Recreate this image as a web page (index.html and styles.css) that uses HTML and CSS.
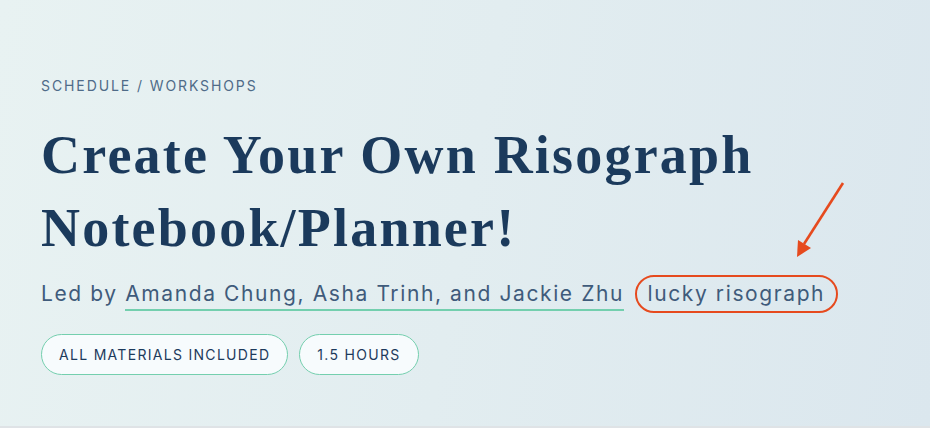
FILE: index.html
```html
<!DOCTYPE html>
<html>
<head>
<meta charset="utf-8">
<link rel="stylesheet" href="styles.css">
</head>
<body>
<main class="hero">
  <div class="crumbs">Schedule / Workshops</div>
  <h1 class="title">Create Your Own Risograph<br>Notebook/Planner!</h1>
  <p class="byline">Led by <span class="names">Amanda Chung, Asha Trinh, and Jackie Zhu</span> <span class="org">lucky risograph</span></p>
  <div class="tags">
    <span class="tag">All materials included</span>
    <span class="tag">1.5 hours</span>
  </div>
  <svg class="arrow" width="80" height="100" viewBox="780 170 80 100">
    <line x1="843" y1="183" x2="804" y2="244" stroke="#e64a1e" stroke-width="2.6"/>
    <polygon points="797,257 798,240 811,248" fill="#e64a1e"/>
  </svg>
</main>
</body>
</html>
```
FILE: styles.css
```css
html, body {
  margin: 0;
  padding: 0;
}
body {
  width: 930px;
  height: 428px;
  overflow: hidden;
  font-family: Inter, "DejaVu Sans", sans-serif;
}
.hero {
  position: relative;
  box-sizing: border-box;
  height: 428px;
  padding: 76px 41px 0;
  background: linear-gradient(100deg, #e8f2f2 0%, #e2edf0 50%, #dbe7ee 100%);
  border-bottom: 2px solid #dfe3e6;
}
.crumbs {
  font-size: 14px;
  line-height: 20px;
  letter-spacing: 1.9px;
  text-transform: uppercase;
  color: #4f6b88;
}
.title {
  margin: 23px 0 0;
  font-family: "Liberation Serif", serif;
  font-weight: bold;
  font-size: 54px;
  line-height: 73px;
  letter-spacing: 2.2px;
  color: #1b3a5c;
}
.byline {
  margin: 9px 0 0;
  font-size: 21px;
  line-height: 40px;
  letter-spacing: 1.6px;
  color: #3f5b7b;
}
.names {
  border-bottom: 2px solid #73cfae;
  padding-bottom: 3px;
}
.org {
  display: inline-block;
  margin-left: 3px;
  padding: 0 11px;
  line-height: 34px;
  border: 2.5px solid #e64a1e;
  border-radius: 20px;
}
.tags {
  display: flex;
  gap: 11px;
  margin-top: 20px;
}
.tag {
  display: inline-flex;
  align-items: center;
  height: 41px;
  box-sizing: border-box;
  padding: 0 17px;
  border: 1px solid #74cfae;
  border-radius: 21px;
  background: #f7fbfd;
  font-size: 14px;
  letter-spacing: 1.3px;
  text-transform: uppercase;
  color: #1d3a5c;
}
.arrow {
  position: absolute;
  left: 780px;
  top: 170px;
}
```
